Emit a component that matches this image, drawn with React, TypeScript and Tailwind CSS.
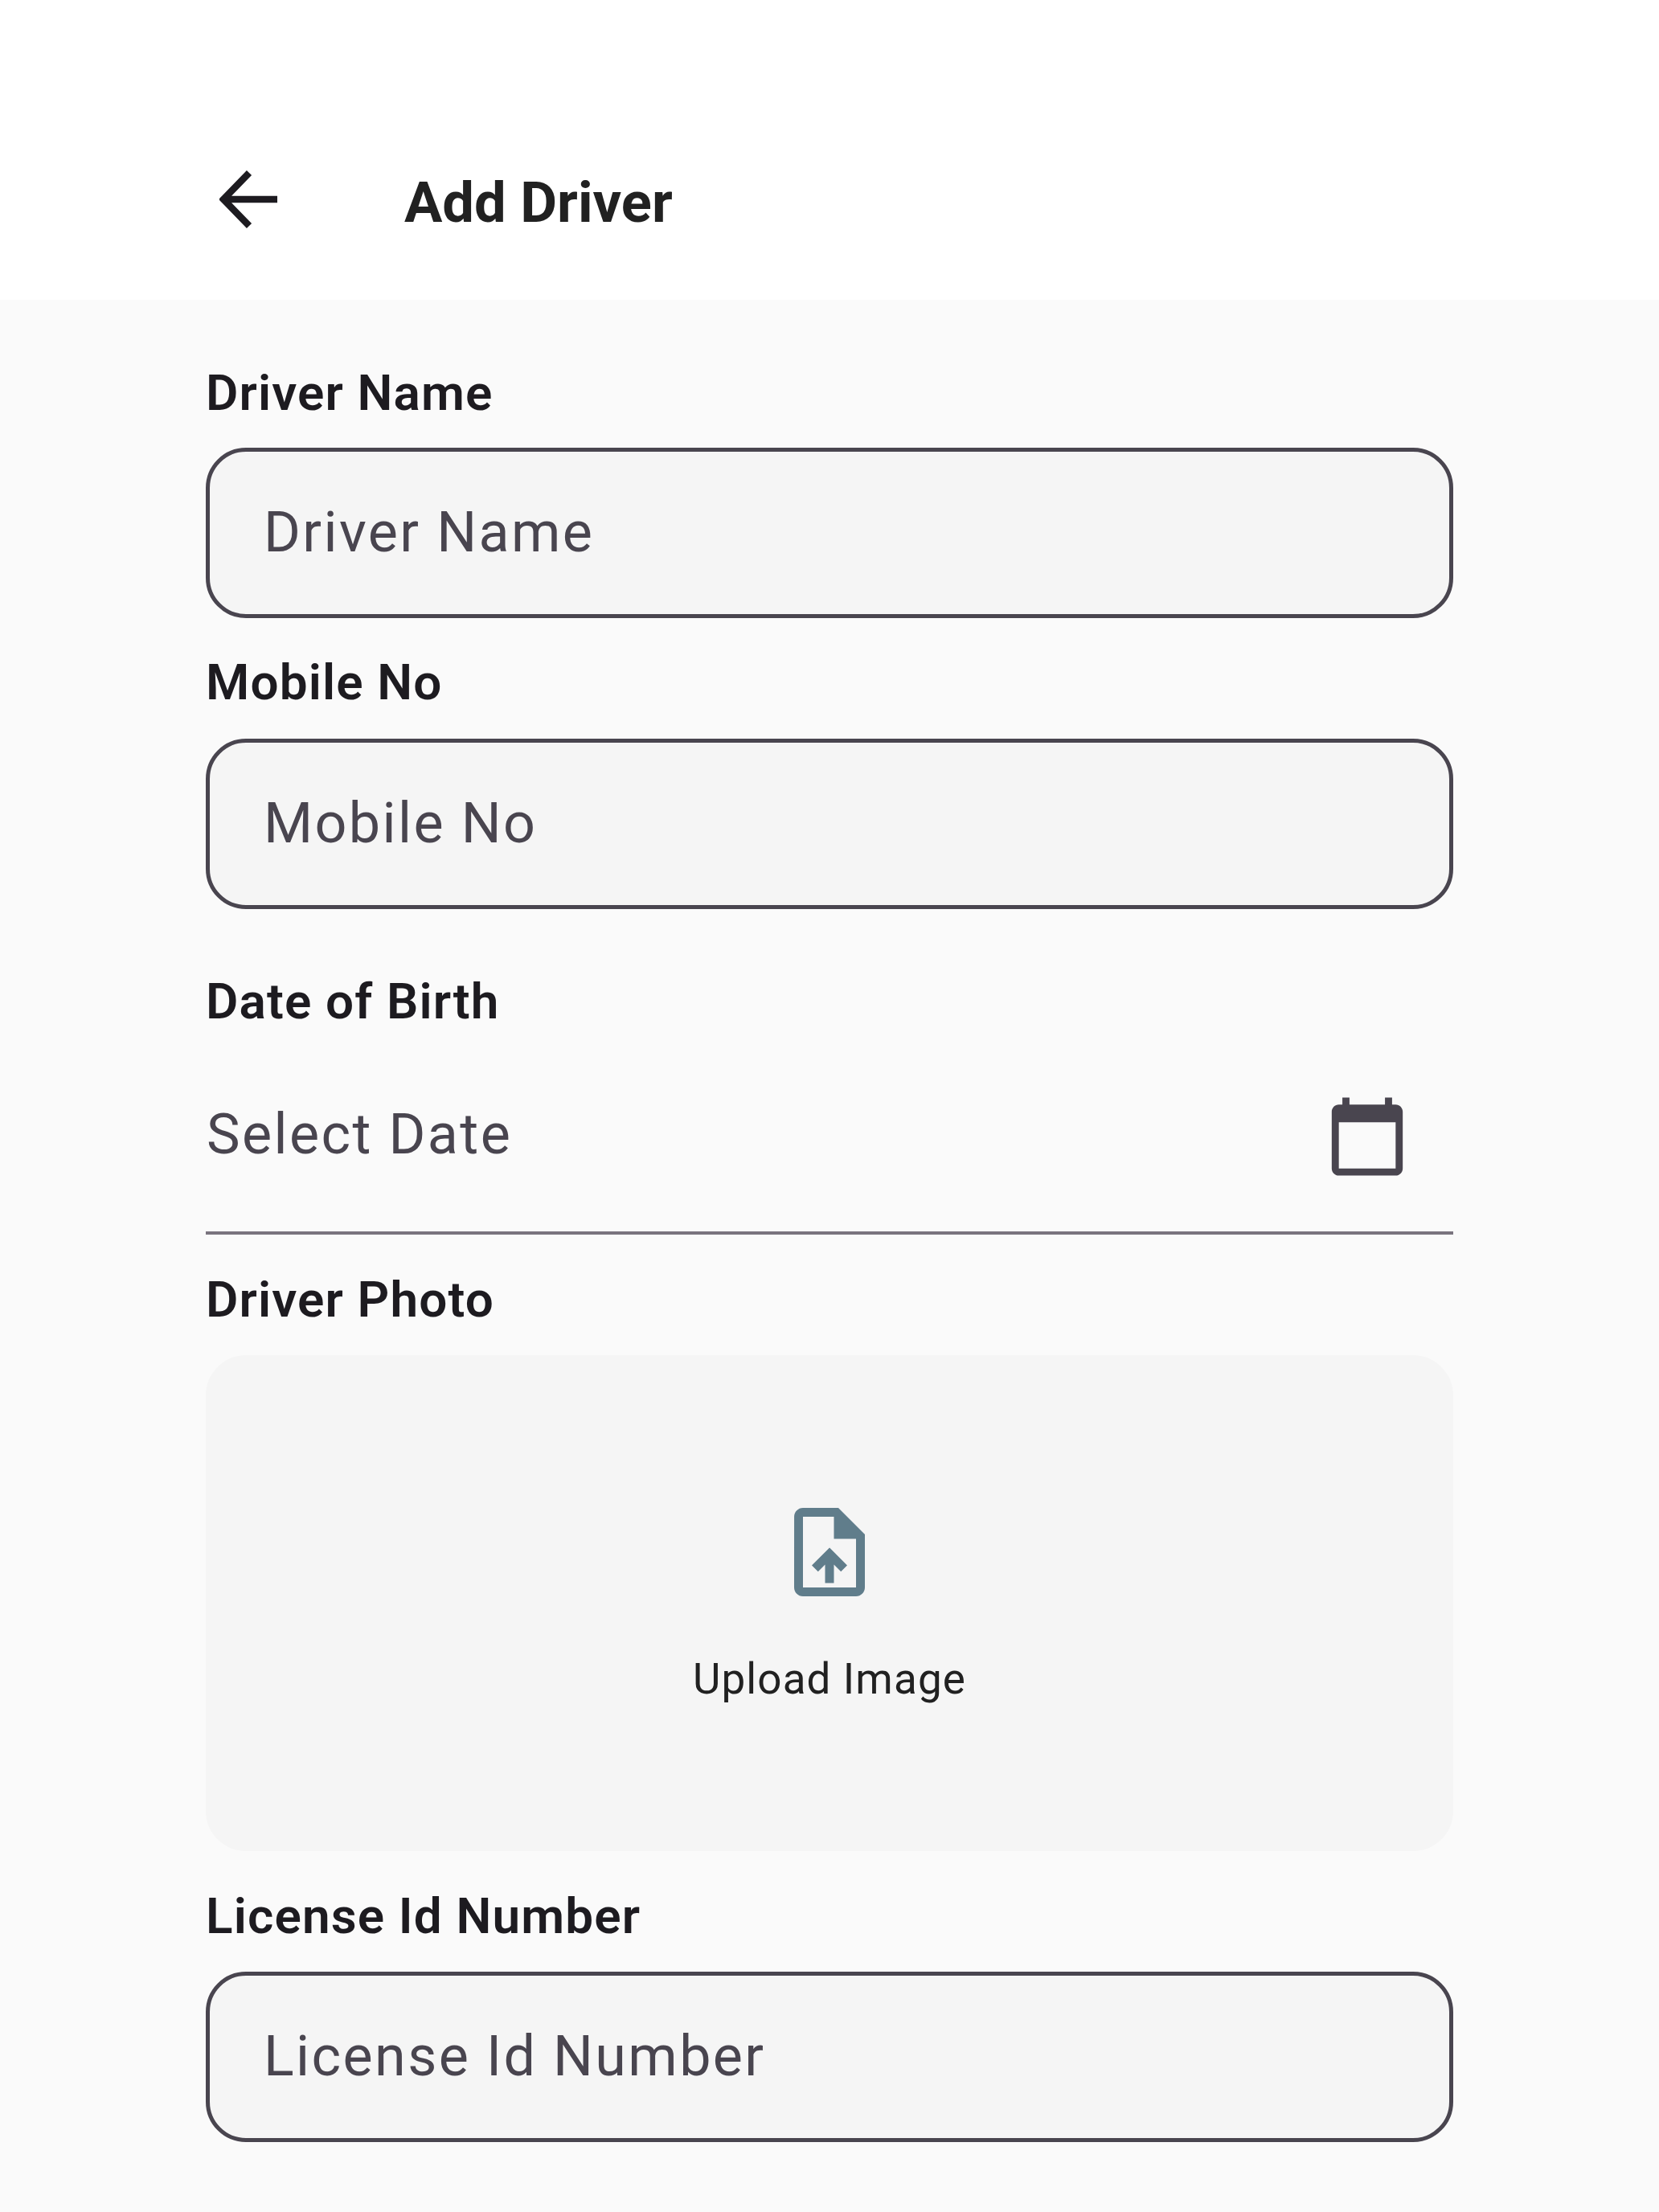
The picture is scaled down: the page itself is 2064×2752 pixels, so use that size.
const font = "font-['Roboto',sans-serif]"

function Label({ text, className }: { text: string; className: string }) {
  return <div className={`${className} text-[62px] leading-[70px] tracking-[1.15px] font-semibold text-[#1d1b20]`}>{text}</div>
}

function TextBox({ placeholder }: { placeholder: string }) {
  return (
    <div className="h-[212px] rounded-[50px] border-[5px] border-[#49454f] bg-[#f5f5f5] flex items-center pl-[67px] pb-[2px] text-[70px] tracking-[2.4px] text-[#49454f]">
      {placeholder}
    </div>
  )
}

export default function App() {
  return (
    <div className={`${font} w-[2064px] h-[2752px] bg-[#fafafa] overflow-hidden`}>
      {/* Header */}
      <div className="h-[373px] bg-white flex items-start">
        <svg className="ml-[273px] mt-[212px] w-[73px] h-[72px]" viewBox="0 0 73 72" fill="none" stroke="#1d1b20" strokeWidth="8.5">
          <path d="M72 36H7M37 3 5 36l32 33" />
        </svg>
        <div className="ml-[157px] mt-[211px] text-[70.5px] leading-[82px] font-bold text-[#212121]">Add Driver</div>
      </div>

      <div className="mx-[256px]">
        <Label text="Driver Name" className="mt-[81px] mb-[68px] h-[35px]" />
        <TextBox placeholder="Driver Name" />
        <Label text="Mobile No" className="mt-[45px] mb-[35px]" />
        <TextBox placeholder="Mobile No" />
        <Label text="Date of Birth" className="mt-[80px]" />

        {/* Date picker */}
        <div className="mt-[39px] h-[216px] border-b-[4px] border-[#79747e] flex items-start justify-between">
          <div className="ml-[1px] mt-[50px] text-[70px] leading-[82px] tracking-[2.4px] text-[#49454f]">Select Date</div>
          <svg className="mt-[41px] mr-[54px] w-[106px] h-[106px]" viewBox="0 0 24 24" fill="#49454f">
            <path d="M20 3h-1V1h-2v2H7V1H5v2H4c-1.1 0-2 .9-2 2v16c0 1.1.9 2 2 2h16c1.1 0 2-.9 2-2V5c0-1.1-.9-2-2-2zm0 18H4V8h16v13z" />
          </svg>
        </div>

        <Label text="Driver Photo" className="mt-[46px]" />

        {/* Upload box */}
        <div className="mt-[34px] h-[617px] rounded-[50px] bg-[#f5f5f5] flex flex-col items-center">
          <svg className="mt-[179px] w-[132px] h-[132px]" viewBox="0 0 24 24" fill="#607d8b">
            <path d="M14 2H6c-1.1 0-1.99.9-1.99 2L4 20c0 1.1.89 2 1.99 2H18c1.1 0 2-.9 2-2V8l-6-6zm4 18H6V4h7v5h5v11zM8 15.01l1.41 1.41L11 14.84V19h2v-4.16l1.59 1.59L16 15.01 12.01 11 8 15.01z" />
          </svg>
          <div className="mt-[61px] text-[53px] leading-[62px] tracking-[1.1px] text-[#212121]">Upload Image</div>
        </div>

        <Label text="License Id Number" className="mt-[46px] mb-[34px]" />
        <TextBox placeholder="License Id Number" />
      </div>
    </div>
  )
}
